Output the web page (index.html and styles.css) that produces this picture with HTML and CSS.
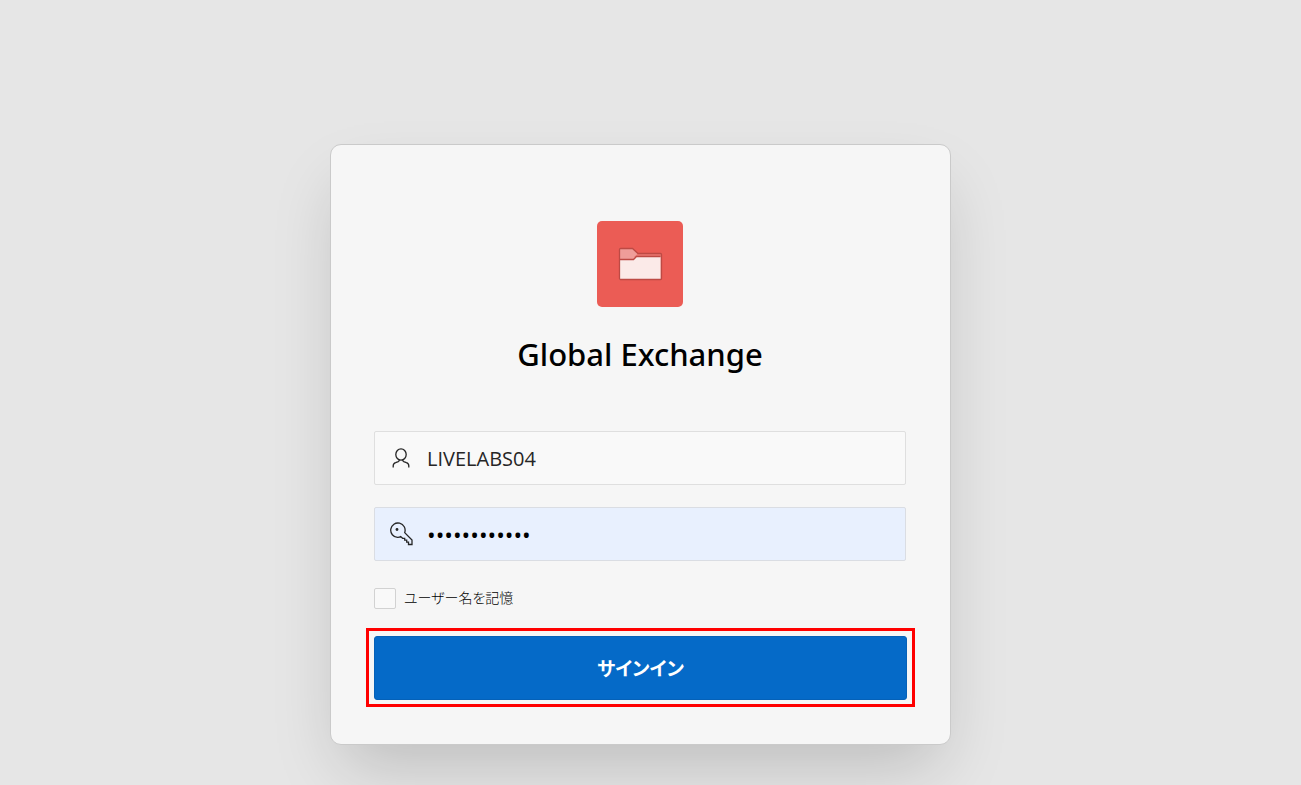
FILE: index.html
```html
<!DOCTYPE html>
<html lang="ja">
<head>
<meta charset="utf-8">
<meta name="viewport" content="width=device-width, initial-scale=1">
<title>Global Exchange</title>
<link rel="stylesheet" href="styles.css">
</head>
<body>
<main class="page">
  <form class="card">
    <header class="brand">
      <svg class="logo" viewBox="0 0 86 86" aria-hidden="true">
        <rect width="86" height="86" rx="5" fill="#eb5c55"/>
        <path d="M22 58V28.500q0-1 1-1H35.500l5 5H63q1 0 1 1V58z" fill="#ef9d99"/>
        <path d="M41 32.500H64V36H37z" fill="#eb7771"/>
        <path d="M22.500 38.500H36.500l3-3H63.500V58.500h-41z" fill="#fbeae8"/>
        <path d="M22.500 38.500H36.500l3-3H63.500M23.500 27.500H35.500l5.500 5H63.500q1 0 1 1V57.500q0 1-1 1H23.500q-1 0-1-1V28.500q0-1 1-1z" fill="none" stroke="#bd4a44" stroke-width="1.300"/>
      </svg>
      <h1 class="title">Global Exchange</h1>
    </header>
    <label class="field">
      <svg class="icon" viewBox="0 0 24 24" aria-hidden="true">
        <ellipse cx="12" cy="8.500" rx="5.200" ry="5.700"/>
        <path d="M4.200 21.500v-1.800q0-2.300 2.400-3.100l2.700-1q1-.4 1-1.600M19.800 21.500v-1.800q0-2.300-2.400-3.100l-2.700-1q-1-.4-1-1.600"/>
      </svg>
      <input class="input" type="text" value="LIVELABS04" aria-label="ユーザー名" autocomplete="off">
    </label>
    <label class="field field-filled">
      <svg class="icon" viewBox="0 0 24 24" aria-hidden="true">
        <path d="M15.700 10.600A7.200 7.200 0 1 0 8.500 15.400q2 .1 3.200-.8l1.900 1.700h2.100v1.800h2v2h1.800v2.400h3.500V18z"/>
        <circle class="dot" cx="8" cy="7.500" r="1.400"/>
      </svg>
      <input class="input input-secret" type="password" value="livelabs0400" aria-label="パスワード" autocomplete="off">
    </label>
    <label class="remember"><input class="check" type="checkbox"><span>ユーザー名を記憶</span></label>
    <div class="highlight"><button class="submit" type="button">サインイン</button></div>
  </form>
</main>
</body>
</html>
```
FILE: styles.css
```css
* { box-sizing: border-box; }
body {
  margin: 0;
  background: #e6e6e6;
  color: #000;
  font-family: "Noto Sans", "Noto Sans CJK JP", sans-serif;
}
.page {
  display: flex;
  flex-direction: column;
  align-items: center;
  justify-content: center;
  min-height: 100vh;
  padding: 144px 20px 40px 0;
}
.card {
  display: flex;
  flex-direction: column;
  width: 100%;
  max-width: 621px;
  padding: 76px 44px 37px 43px;
  background: #f6f6f6;
  border: 1px solid #cacaca;
  border-radius: 11px;
  box-shadow: 0 32px 64px -12px rgba(0, 0, 0, .18);
}
.brand {
  display: flex;
  flex-direction: column;
  align-items: center;
  gap: 24px;
  margin-bottom: 54px;
}
.logo { width: 86px; height: 86px; }
.title {
  margin: 0;
  font-size: 31px;
  font-weight: 500;
  line-height: 46px;
}
.field {
  display: flex;
  align-items: center;
  gap: 14px;
  height: 54px;
  margin-bottom: 22px;
  padding: 0 14px;
  background: #f9f9f9;
  border: 1px solid #dfdfdf;
  border-radius: 2px;
}
.field-filled { background: #e8f0fe; border-color: #dadde3; }
.icon {
  flex: none;
  width: 24px;
  height: 24px;
  fill: none;
  stroke: #262626;
  stroke-width: 1.300;
}
.dot { fill: #262626; stroke: none; }
.input {
  flex: 1;
  min-width: 0;
  padding: 2px 0 0;
  border: 0;
  outline: 0;
  background: transparent;
  color: #262626;
  font: 400 20px/32px "Open Sans", "Noto Sans", sans-serif;
}
.input-secret {
  color: #000;
  font-size: 23px;
}
.remember {
  display: flex;
  align-items: center;
  align-self: flex-start;
  gap: 8px;
  height: 30px;
  font-size: 14px;
  font-weight: 300;
  line-height: 20px;
  font-feature-settings: "palt";
}
.check {
  appearance: none;
  width: 22px;
  height: 21px;
  margin: 0;
  background: #f9f9f9;
  border: 1px solid #d2d2d2;
  border-radius: 2px;
}
.check:checked { background: #056ac8; }
.highlight {
  display: flex;
  margin: 15px -9px 0 -8px;
  padding: 5px 5px 4px;
  border: 3px solid #f00;
}
.submit {
  flex: 1;
  height: 64px;
  border: 1px solid #0561b8;
  border-radius: 3px;
  background: #056ac8;
  color: #fff;
  font: 700 19px/32px "Noto Sans CJK JP", sans-serif;
  font-feature-settings: "palt";
}
```
